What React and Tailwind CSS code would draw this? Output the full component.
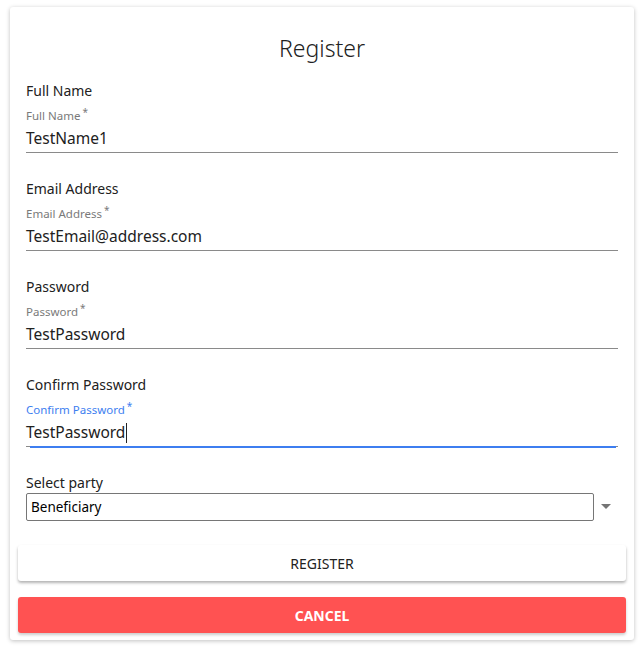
import React from "react";

const fields = [
  { label: "Full Name", value: "TestName1" },
  { label: "Email Address", value: "TestEmail@address.com" },
  { label: "Password", value: "TestPassword" },
  { label: "Confirm Password", value: "TestPassword", focused: true },
];

function Field({ label, value, focused }) {
  return (
    <div className="flex flex-col mb-[26px]">
      <div className="h-[20px] leading-[20px] text-[14px] text-[#212121]">{label}</div>
      <div
        className={
          "mt-[7px] h-[16px] leading-[16px] text-[11.5px] " +
          (focused ? "text-[#3d7ef0]" : "text-[#7a7a7a]")
        }
      >
        {label}
        <span className="relative top-[-4px] ml-[2px] text-[10px]">*</span>
      </div>
      <div className="relative mt-[3px] h-[26px] leading-[22px] text-[15.5px] text-[#212121] border-b border-[#8a8a8a]">
        {value}
        {focused && (
          <span className="inline-block align-middle h-[20px] w-px bg-[#222] ml-[1px] -mt-[2px]" />
        )}
        {focused && (
          <div className="absolute left-[4px] right-[2px] bottom-[-2px] h-[2px] bg-[#3d7ef0]" />
        )}
      </div>
    </div>
  );
}

export default function App() {
  return (
    <div
      className="min-h-screen bg-white pt-[7px] pl-[10px]"
      style={{ fontFamily: "'Noto Sans', 'Open Sans', sans-serif" }}
    >
      <div className="w-[624px] bg-white rounded-[3px] shadow-[0_1px_4px_rgba(0,0,0,0.25)] pt-[25px] pb-[7px]">
        <h1 className="text-center text-[23px] leading-[32px] font-light text-[#212121] mb-[17px]">
          Register
        </h1>

        <div className="px-[16px]">
          {fields.map((f) => (
            <Field key={f.label} {...f} />
          ))}

          <div>
            <div className="h-[20px] leading-[20px] text-[14px] text-[#212121]">Select party</div>
            <div className="flex items-center">
              <div className="w-[568px] h-[28px] border border-[#767676] rounded-[2px] flex items-center pl-[4px] text-[13.5px] text-black">
                Beneficiary
              </div>
              <svg width="10" height="6" viewBox="0 0 10 6" className="ml-[7px]">
                <path d="M0 0 L10 0 L5 5 Z" fill="#757575" />
              </svg>
            </div>
          </div>
        </div>

        <div className="px-[8px] mt-[24px] flex flex-col gap-[16px]">
          <button className="h-[36px] w-full bg-white rounded-[3px] shadow-[0_2px_3px_rgba(0,0,0,0.3)] text-[14px] text-[#212121] uppercase">
            Register
          </button>
          <button className="h-[36px] w-full bg-[#ff5252] rounded-[3px] shadow-[0_2px_3px_rgba(0,0,0,0.2)] text-[14px] font-bold text-white uppercase">
            Cancel
          </button>
        </div>
      </div>
    </div>
  );
}
